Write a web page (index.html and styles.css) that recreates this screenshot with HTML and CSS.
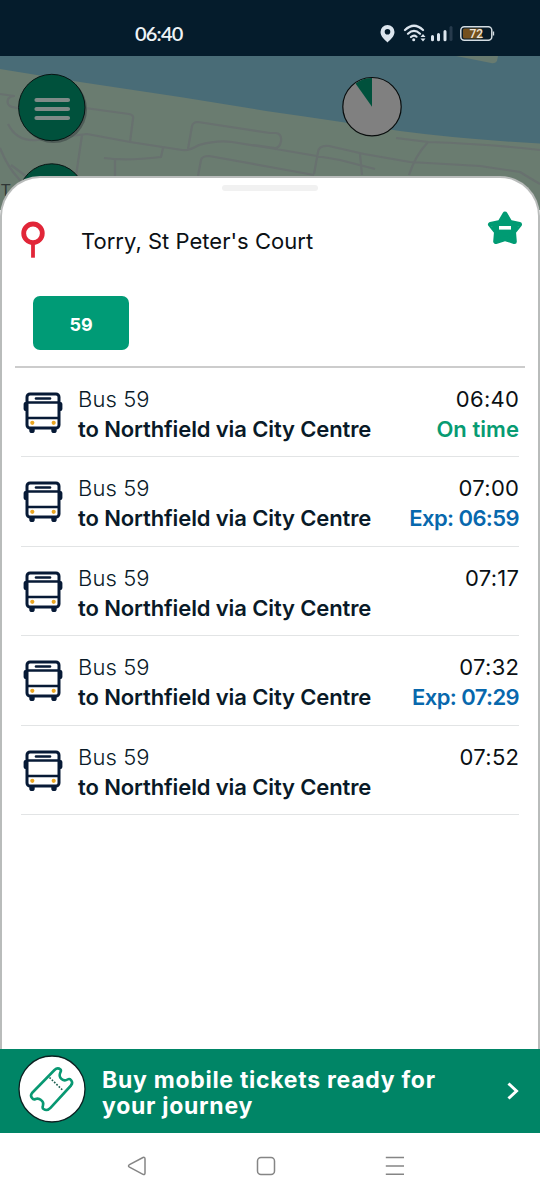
FILE: index.html
```html
<!DOCTYPE html>
<html lang="en">
<head>
<meta charset="utf-8">
<title>Torry, St Peter's Court</title>
<link rel="stylesheet" href="styles.css">
</head>
<body>
<svg class="defs" width="0" height="0" aria-hidden="true">
  <symbol id="bus" viewBox="0 0 40 42">
    <rect x="4" y="2" width="32" height="34" rx="3" fill="#fff" stroke="#071a36" stroke-width="3"/>
    <path d="M4 10.5h32M4 26h32" stroke="#071a36" stroke-width="2.6"/>
    <path d="M13 6.5h14" stroke="#071a36" stroke-width="2.6" stroke-linecap="round"/>
    <path d="M4 10H2.5Q.6 10 .6 12v5q0 2 1.900 2H4zM36 10h1.500q1.900 0 1.900 2v5q0 2-1.900 2H36zM6.300 36h5.400v2.700q0 2.300-2.700 2.300t-2.700-2.300zM28.300 36h5.400v2.700q0 2.300-2.700 2.300t-2.700-2.300z" fill="#071a36"/>
    <circle cx="9.300" cy="30.800" r="2.100" fill="#eaa621"/><circle cx="30.700" cy="30.800" r="2.100" fill="#eaa621"/>
  </symbol>
</svg>
<div class="phone">
  <header class="status">
    <span class="clock">06:40</span>
    <svg class="status-icons" width="120" height="24" viewBox="380 22 120 24">
      <path fill="#dce5ee" fill-rule="evenodd" d="M387.500 25a7 7 0 0 0-7 7c0 4.500 4 7.500 7 10.500 3-3 7-6 7-10.500a7 7 0 0 0-7-7zm0 4a2.800 2.800 0 1 1 0 5.600 2.800 2.800 0 0 1 0-5.600z"/>
      <g fill="none" stroke="#dce5ee" stroke-width="2.200" stroke-linecap="round"><path d="M405 30q9-8.500 18 0M408 33.700q6-5.500 12 0M411 37q3-2.700 5.500-.300"/></g>
      <circle cx="413.700" cy="39.800" r="1.500" fill="#dce5ee"/>
      <path d="M420.500 37l2.500-3 2.500 3zM420.500 38.600l2.500 3 2.500-3z" fill="#dce5ee"/>
      <path d="M432.500 36.500v3.200M438.500 34.500v5.200M445 31.500v8.200" stroke="#dce5ee" stroke-width="3" stroke-linecap="round"/><path d="M451 27.500v12" stroke="#263a4c" stroke-width="3" stroke-linecap="round"/>
      <rect x="460.800" y="26.700" width="31" height="13.600" rx="3.500" fill="#071a27" stroke="#d3dce2" stroke-width="1.500"/><rect x="463" y="28.500" width="19" height="10" rx="1.500" fill="#74501e"/>
      <path d="M493.500 31.500v4" stroke="#d3dce2" stroke-width="1.300"/>
      <text class="battery" x="476.200" y="38">72</text>
    </svg>
  </header>
  <section class="map">
    <svg class="map-art" width="540" height="154" viewBox="0 56 540 154">
      <rect y="56" width="540" height="154" fill="#6a7c70"/>
      <path d="M0 56H540V143.500Q460 139 400 131Q330 120 266 111L180 97 80 82 0 69z" fill="#496c77"/>
      <path d="M456 56H498l-1 5q-2 3-6 2z" fill="#687b70"/>
      <g fill="none" stroke="#68716f" stroke-width="2.200" stroke-linejoin="round">
        <path d="M0 94l14 2q-8 1-6 8 2 4 13 4M8 124q9 18 29 16l50-6 43 8 52 8q7 1 17-5 18-5 33-3l38 6 70 12 35 9M85 108l44 6q5 1 4 5l-3 23M82 135l-6 41M104 158q22 3 57-1l2-9M115 159v17M188 149l4-23q1-4 6-4l72 11h6q6 1 5 8t-6 7l-22-3M198 176l3-16q1-4 8-4l61 11 44 8M314 174l4-22q1-7 11-6l35 8 46 8 70 4 40 6q8 5 20 12M360 154l2 21M396 138l32 4q60 2 112 8M428 142q-13 14-19 33M0 148q8 20 19 31l7 8M11 165l16 12"/>
      </g>
      <text class="map-label" x="1" y="196">T</text>
      <circle cx="53.500" cy="109.500" r="33.500" fill="#4f5c57"/>
      <circle cx="51.800" cy="107.500" r="33.200" fill="#00513c" stroke="#071413"/>
      <path d="M36.500 100h31.500M36.500 109h31.500M36.500 118h31.500" stroke="#7f8b88" stroke-width="4.200" stroke-linecap="round"/>
      <circle cx="51.800" cy="197" r="33.200" fill="#00513c" stroke="#071413"/>
      <circle cx="372" cy="106.700" r="29.200" fill="#808080" stroke="#080c0c" stroke-width="1.200"/>
      <path d="M372 106.700V78.100A28.600 28.600 0 0 0 355.500 83.400z" fill="#00513c"/>
    </svg>
  </section>
  <main class="sheet">
    <div class="handle"></div>
    <div class="stop">
      <svg class="pin" width="26" height="38" viewBox="0 0 26 38"><circle cx="13" cy="12.300" r="9.300" fill="#fff" stroke="#e12638" stroke-width="4.800"/><path d="M13 22v14.700" stroke="#e12638" stroke-width="3.800"/></svg>
      <h1 class="stop-name"><span>Torry, St Peter's Court</span></h1>
      <svg class="star" width="36" height="36" viewBox="0 0 36 36"><path d="M18 4L23 12.500 32.500 14.500 26.500 22 27.300 31.500 18 28.500 8.700 31.500 9.500 22 3.500 14.500 13 12.500z" fill="#009b73" stroke="#009b73" stroke-width="5" stroke-linejoin="round"/><rect x="12" y="16" width="12" height="3.600" fill="#fff"/></svg>
    </div>
    <div class="routes"><button class="route">59</button></div>
    <ul class="departures">
      <li class="departure"><svg class="bus" width="40" height="42"><use href="#bus"/></svg><div class="service"><span class="line">Bus 59</span><span class="dest">to Northfield via City Centre</span></div><div class="times"><span class="due">06:40</span><span class="state ontime">On time</span></div></li>
      <li class="departure"><svg class="bus" width="40" height="42"><use href="#bus"/></svg><div class="service"><span class="line">Bus 59</span><span class="dest">to Northfield via City Centre</span></div><div class="times"><span class="due">07:00</span><span class="state expected">Exp: 06:59</span></div></li>
      <li class="departure"><svg class="bus" width="40" height="42"><use href="#bus"/></svg><div class="service"><span class="line">Bus 59</span><span class="dest">to Northfield via City Centre</span></div><div class="times"><span class="due">07:17</span></div></li>
      <li class="departure"><svg class="bus" width="40" height="42"><use href="#bus"/></svg><div class="service"><span class="line">Bus 59</span><span class="dest">to Northfield via City Centre</span></div><div class="times"><span class="due">07:32</span><span class="state expected">Exp: 07:29</span></div></li>
      <li class="departure"><svg class="bus" width="40" height="42"><use href="#bus"/></svg><div class="service"><span class="line">Bus 59</span><span class="dest">to Northfield via City Centre</span></div><div class="times"><span class="due">07:52</span></div></li>
    </ul>
  </main>
  <a class="banner">
    <svg class="ticket" width="68" height="68" viewBox="0 0 68 68"><circle cx="34" cy="34" r="33" fill="#fff" stroke="#0b2020" stroke-width="1.300"/>
      <g fill="none" stroke="#089872" stroke-width="2.600" stroke-linejoin="round"><path d="M36.500 15Q39.500 12 42.500 14.500Q43.500 15.500 42.300 17.500Q40.500 21.500 43.500 24Q46.500 26.500 49.500 24.500Q51.500 23.300 53 25Q55.300 27.500 53 30.500L32.500 52.800Q29 56.500 25.500 54Q24 53 25 50.500Q26 47 23 45Q20.500 43 17.500 44Q15.500 45 14 43Q12 40.500 14 38z"/><path d="M31.500 22.500L45 35.500" stroke="#1d5f50" stroke-width="1.600" stroke-dasharray="1.700 1.500"/></g></svg>
    <p class="banner-text">Buy mobile tickets ready for<br>your journey</p>
    <svg class="chevron" width="14" height="20" viewBox="0 0 14 20"><path d="M2.500 2.500L10.500 10l-8 7.500" fill="none" stroke="#fff" stroke-width="3"/></svg>
  </a>
  <nav class="navbar">
    <svg width="20" height="20" viewBox="0 0 20 20"><path d="M16 1.500Q18 .7 18 3V17Q18 19.300 16 18.300L2.500 11.200Q.5 10 2.500 8.700z"/></svg>
    <svg width="20" height="20" viewBox="0 0 20 20"><rect x="1.500" y="1.500" width="17" height="17" rx="3.500"/></svg>
    <svg width="20" height="20" viewBox="0 0 20 20"><path d="M.8 1.600h18.200M.8 10h18.200M.8 18.200h18.200"/></svg>
  </nav>
</div>
</body>
</html>
```
FILE: styles.css
```css
* { box-sizing: border-box; }
body { margin: 0; font-family: Inter, "Liberation Sans", sans-serif; color: #091a28; background: #fff; }
svg { display: block; flex: none; }
.defs { position: absolute; }
.phone { width: 540px; height: 1199px; display: flex; flex-direction: column; overflow: hidden; }
.status { height: 56px; flex: none; background: #051c2c; display: flex; justify-content: space-between; align-items: center; padding: 12px 40px 0 135px; }
.clock { color: #eef3f6; font-family: Lato, sans-serif; font-size: 20px; font-weight: 600; letter-spacing: -.8px; margin-top: -2px; }
.battery { font: 500 12px Roboto, sans-serif; fill: #eee5d9; text-anchor: middle; }
.map { height: 154px; flex: none; }
.map-label { font: 17px "Noto Sans", sans-serif; fill: #303737; }
.sheet { flex: 1; min-height: 0; margin-top: -34px; position: relative; background: #fff; border: 2px solid #b9bcbb; border-bottom: 0; border-radius: 40px 40px 0 0; }
.handle { width: 96px; height: 6px; border-radius: 3px; background: #f1f1f1; margin: 7px auto 0; }
.stop { display: flex; height: 105px; padding: 20px 15px 0 18px; }
.pin { margin-top: 10px; }
.stop-name { flex: 1; margin: 15px 0 0 35px; font-size: 22px; line-height: 30px; font-weight: 400; letter-spacing: .02px; color: #0b1014; }
.star { margin-top: -1px; }
.routes { padding-left: 31px; height: 70px; }
.route { display: block; width: 96px; height: 54px; border: 0; border-radius: 7px; background: #009b76; color: #fff; font: 700 18px Inter, sans-serif; padding: 3px 0 0; }
.departures { list-style: none; margin: 0 13px; padding: 0 6px; border-top: 2px solid #ccc; }
.departure { height: 89.4px; border-bottom: 1.500px solid #e2e4e5; padding-top: 16px; display: flex; font-size: 22px; line-height: 30px; }
.bus { margin: 8px 0 0 2px; }
.service { flex: 1; padding-left: 15px; }
.line, .dest, .due, .state { display: block; white-space: nowrap; }
.line { font-weight: 300; letter-spacing: .1px; }
.dest { font-weight: 600; letter-spacing: -.12px; }
.times { text-align: right; }
.due { color: #0a1014; letter-spacing: .3px; margin-right: -.3px; }
.state { font-weight: 600; }
.ontime { color: #079b72; letter-spacing: .05px; }
.expected { color: #0868ad; letter-spacing: -.6px; }
.banner { height: 84px; flex: none; background: #008566; display: flex; padding: 0 20px 0 18px; }
.ticket { margin-top: 6px; }
.banner-text { flex: 1; margin: 18px 0 0 16px; color: #fff; font-size: 23px; line-height: 26px; font-weight: 700; letter-spacing: .72px; white-space: nowrap; }
.chevron { margin-top: 32px; }
.navbar { height: 66px; flex: none; display: flex; justify-content: space-between; padding: 23px 135px 0 127px; }
.navbar svg { fill: none; stroke: #858585; stroke-width: 1.500; }
```
